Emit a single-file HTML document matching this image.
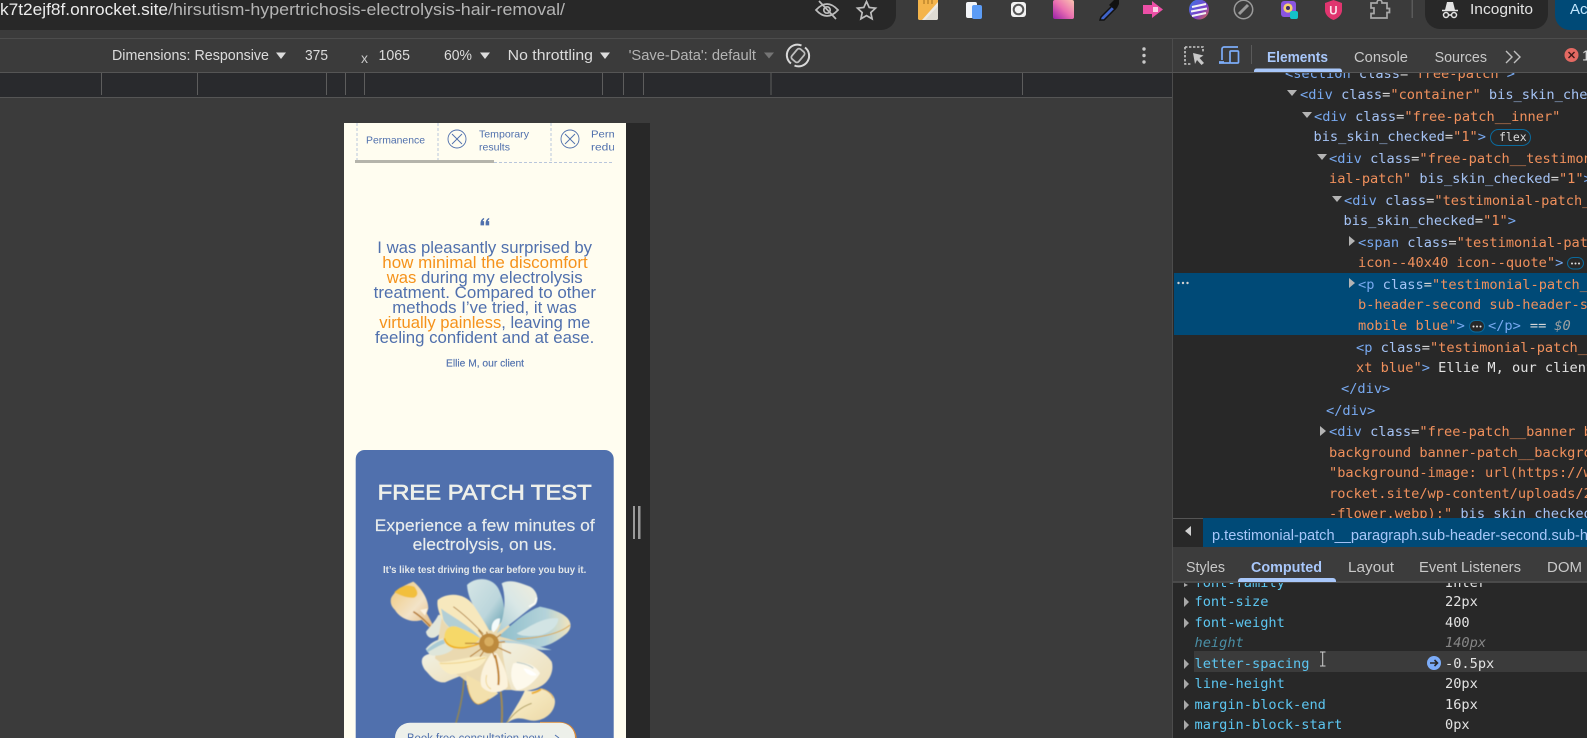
<!DOCTYPE html>
<html lang="en">
<head>
<meta charset="utf-8">
<title>DevTools responsive view</title>
<style>
html,body{margin:0;padding:0;width:1587px;height:738px;overflow:hidden;background:#3b3b3b}
svg{display:block}
text{white-space:pre}
.s{font-family:"Liberation Sans",sans-serif}
.m{font-family:"DejaVu Sans Mono","Liberation Mono",monospace;font-size:13.65px}
.t{fill:#78a9f0}.a{fill:#a5c3f5}.v{fill:#f0905c}.e{fill:#d8d8d8}
.n{fill:#5cc5f0}.w{fill:#e3e3e3}
.tb{font-size:14.5px;fill:#dcdcdc}
.tab{font-size:14.5px;fill:#c8c8c8}
.q{font-size:16.8px;fill:#5070ad}.o{font-size:16.8px;fill:#f5921b}
</style>
</head>
<body>
<svg xmlns="http://www.w3.org/2000/svg" width="1587" height="738" viewBox="0 0 1587 738">
<defs>
<linearGradient id="pk" x1="1" y1="0" x2="0" y2="1"><stop offset="0" stop-color="#fbc4b0"/><stop offset=".5" stop-color="#ea70b0"/><stop offset="1" stop-color="#9a1fa8"/></linearGradient>
<linearGradient id="gl" x1="0" y1="0" x2="1" y2="1"><stop offset="0" stop-color="#3a7be8"/><stop offset=".6" stop-color="#7a3fc8"/><stop offset="1" stop-color="#e8703a"/></linearGradient>
<linearGradient id="bl" x1="0" y1="0" x2="1" y2="1"><stop offset="0" stop-color="#d6e6e6"/><stop offset=".6" stop-color="#bcd6dc"/><stop offset="1" stop-color="#5f9cae"/></linearGradient>
<linearGradient id="tr" x1="1" y1="0" x2="0" y2="1"><stop offset="0" stop-color="#f0eddc"/><stop offset=".5" stop-color="#d9e7e6"/><stop offset="1" stop-color="#a9cbd4"/></linearGradient>
<linearGradient id="bud" x1="0" y1="0" x2="1" y2="1"><stop offset="0" stop-color="#f0c878"/><stop offset=".5" stop-color="#f3e3c8"/><stop offset="1" stop-color="#dca860"/></linearGradient>
<linearGradient id="cr" x1="0" y1="0" x2="1" y2="1"><stop offset="0" stop-color="#fbf1d0"/><stop offset="1" stop-color="#ecd8a4"/></linearGradient>
<linearGradient id="rp" x1="0" y1="0" x2="1" y2="0"><stop offset="0" stop-color="#8fbecb"/><stop offset=".65" stop-color="#b4d3da"/><stop offset="1" stop-color="#f3e5bc"/></linearGradient>
<linearGradient id="lo" x1="0" y1="0" x2="1" y2="1"><stop offset="0" stop-color="#f1f0e2"/><stop offset="1" stop-color="#efdfb8"/></linearGradient>
<filter id="soft" x="-5%" y="-5%" width="110%" height="110%"><feGaussianBlur stdDeviation="1.3"/></filter>
</defs>

<!-- viewport backdrop -->
<rect width="1587" height="738" fill="#3b3b3b"/>

<!-- ruler -->
<rect x="0" y="72" width="1172" height="25" fill="#292a2d"/>
<rect x="0" y="97" width="1172" height="1" fill="#555"/>
<g fill="#5d5d5d">
<rect x="101" y="73" width="1" height="22"/><rect x="197" y="73" width="1" height="22"/><rect x="326" y="73" width="1" height="22"/><rect x="345" y="73" width="1" height="22"/><rect x="364" y="73" width="1" height="22"/><rect x="602" y="73" width="1" height="22"/><rect x="623" y="73" width="1" height="22"/><rect x="643" y="73" width="1" height="22"/><rect x="770.500" y="73" width="1" height="22"/><rect x="1022" y="73" width="1" height="22"/>
</g>

<!-- device page -->
<rect x="626" y="123" width="24" height="615" fill="#282828"/>
<rect x="633" y="506" width="2" height="33" fill="#9a9a9a"/><rect x="638" y="506" width="2.5" height="33" fill="#9a9a9a"/>
<rect x="344" y="123" width="282" height="615" fill="#fffdf0"/>

<!-- table strip -->
<g stroke="#b9c6db" stroke-width="1" stroke-dasharray="3 2" fill="none">
<path d="M357 123V161M438 123V161M551 123V161M494 162.5H614"/>
</g>
<rect x="355" y="160" width="139" height="3" fill="#b5b4ab"/>
<text class="s" x="366" y="143.5" font-size="10.2" fill="#5070ad" textLength="59" lengthAdjust="spacingAndGlyphs">Permanence</text>
<g fill="none" stroke="#5070ad" stroke-width="0.9">
<circle cx="457" cy="139" r="9"/><path d="M452 134L462 144M462 134L452 144"/>
<circle cx="570" cy="139" r="9"/><path d="M565 134L575 144M575 134L565 144"/>
</g>
<text class="s" x="479" y="137.5" font-size="10.2" fill="#5070ad" textLength="50" lengthAdjust="spacingAndGlyphs">Temporary</text>
<text class="s" x="479" y="150.5" font-size="10.2" fill="#5070ad" textLength="31" lengthAdjust="spacingAndGlyphs">results</text>
<svg x="591" y="125" width="23" height="32" viewBox="591 125 23 32"><text class="s" x="591" y="12.5" transform="translate(0,125)" font-size="10.2" fill="#5070ad" textLength="27" lengthAdjust="spacingAndGlyphs">Perm</text><text class="s" x="591" y="25.5" transform="translate(0,125)" font-size="10.2" fill="#5070ad" textLength="30" lengthAdjust="spacingAndGlyphs">reduc</text></svg>

<!-- quote -->
<g fill="#5070ad">
<path d="M480.5 223.500c0-3 1.500-4.800 3.600-5.600v1.500c-.8.5-1.300 1-1.400 1.700h1.400v4.300h-3.600z"/>
<path d="M485.600 223.500c0-3 1.500-4.800 3.600-5.600v1.500c-.8.5-1.300 1-1.400 1.700h1.400v4.300h-3.600z"/>
</g>
<text class="s q" x="377.3" y="253" textLength="214.7" lengthAdjust="spacingAndGlyphs">I was pleasantly surprised by</text>
<text class="s o" x="382.3" y="268" textLength="205.4" lengthAdjust="spacingAndGlyphs">how minimal the discomfort</text>
<text class="s o" x="386.7" y="283" textLength="29.6" lengthAdjust="spacingAndGlyphs">was</text>
<text class="s q" x="421" y="283" textLength="161.7" lengthAdjust="spacingAndGlyphs">during my electrolysis</text>
<text class="s q" x="373.7" y="298" textLength="222.3" lengthAdjust="spacingAndGlyphs">treatment. Compared to other</text>
<text class="s q" x="392.3" y="313" textLength="184.4" lengthAdjust="spacingAndGlyphs">methods I’ve tried, it was</text>
<text class="s o" x="379.3" y="328" textLength="122" lengthAdjust="spacingAndGlyphs">virtually painless</text>
<text class="s q" x="501.3" y="328" textLength="89" lengthAdjust="spacingAndGlyphs">, leaving me</text>
<text class="s q" x="375" y="343" textLength="219.3" lengthAdjust="spacingAndGlyphs">feeling confident and at ease.</text>
<text class="s" x="446" y="366.5" font-size="10.5" fill="#5070ad" stroke="#5070ad" stroke-width=".15" textLength="78" lengthAdjust="spacingAndGlyphs">Ellie M, our client</text>

<!-- banner -->
<path d="M355.700 738V459a9 9 0 0 1 9-9h240a9 9 0 0 1 9 9v279z" fill="#5070ad"/>
<text class="s" x="377.7" y="499.7" font-size="21" fill="#eef0ea" stroke="#eef0ea" stroke-width=".65" textLength="214" lengthAdjust="spacingAndGlyphs">FREE PATCH TEST</text>
<text class="s" x="374.7" y="531" font-size="16.6" fill="#e8ecec" stroke="#e8ecec" stroke-width=".15" textLength="220" lengthAdjust="spacingAndGlyphs">Experience a few minutes of</text>
<text class="s" x="412.7" y="550" font-size="16.6" fill="#e8ecec" stroke="#e8ecec" stroke-width=".15" textLength="144" lengthAdjust="spacingAndGlyphs">electrolysis, on us.</text>
<text class="s" x="383" y="573" font-size="10.2" font-weight="bold" fill="#e4e8ea" textLength="203.3" lengthAdjust="spacingAndGlyphs">It’s like test driving the car before you buy it.</text>

<!-- flower (coordinates in 3x units) -->
<g transform="translate(385 575) scale(.33333)">
<g filter="url(#soft)">
<path d="M237 300C236 350 226 400 212 447" fill="none" stroke="#8f8558" stroke-width="5"/>
<path d="M347 350C352 385 352 420 350 447" fill="none" stroke="#a08a55" stroke-width="6"/>
<!-- lower right bud -->
<path d="M362 447C390 400 410 370 420 345C440 352 455 345 470 340C490 345 510 360 510 380C510 410 480 440 440 437C415 432 395 420 362 447Z" fill="url(#cr)"/>
<path d="M440 355C450 352 460 350 468 342" fill="none" stroke="#eeb02c" stroke-width="6"/>
<path d="M470 342C485 345 500 355 505 370" fill="none" stroke="#e2a840" stroke-width="2.5"/>
<path d="M364 445C385 415 410 395 440 385" fill="none" stroke="#aa9a58" stroke-width="3"/>
<!-- top left bud -->
<path d="M18 70C30 45 60 30 85 20C105 35 130 70 130 100L125 115C140 140 150 165 160 180C135 160 120 145 110 135C80 145 45 130 30 105C20 95 15 85 18 70Z" fill="url(#bud)"/>
<path d="M28 52C50 30 70 28 88 35C100 50 100 62 88 68C65 70 45 60 28 52Z" fill="#f2bf3d"/>
<path d="M85 110C105 122 130 145 158 180" fill="none" stroke="#b87f38" stroke-width="5"/>
<path d="M105 105L128 100L120 122Z" fill="#fbf1df"/>
<!-- back white -->
<path d="M160 120C175 118 190 130 198 150L160 180C145 195 125 190 123 170C135 155 150 140 160 120Z" fill="#e2e6da"/>
<!-- big lower left -->
<path d="M112 250C118 240 130 235 150 235L300 245L270 290C240 295 210 310 180 322C150 325 135 300 120 285C112 272 108 262 112 250Z" fill="url(#lo)"/>
<!-- base behind the centre -->
<path d="M170 130L350 120L400 190L500 270L380 345L280 345L150 250Z" fill="#ead9b0"/>
<!-- top blue -->
<path d="M246 30C270 5 320 5 340 40C355 70 365 110 350 140C335 160 320 170 312 165C290 120 250 90 246 30Z" fill="url(#bl)"/>
<!-- top right -->
<path d="M350 25C375 10 410 25 435 35C455 45 465 75 450 90C420 110 390 140 335 175C360 130 365 70 350 25Z" fill="url(#tr)"/>
<path d="M432 95L450 85L455 68" fill="none" stroke="#fdfcf5" stroke-width="5"/>
<!-- right big -->
<path d="M345 180C380 150 420 110 465 95C490 100 530 110 548 130C560 145 560 160 545 175C515 200 480 220 450 215C420 205 385 195 345 185Z" fill="url(#rp)"/>
<path d="M395 175C430 160 470 125 520 130C520 150 500 170 470 180C440 185 410 185 395 175Z" fill="#d2e4e4"/>
<path d="M395 192C450 190 520 180 555 150" fill="none" stroke="#d9a845" stroke-width="3"/>
<path d="M345 195C400 195 450 210 500 225L470 225C420 215 380 205 345 200Z" fill="#b9d3da"/>
<path d="M320 165C318 150 325 130 345 130C345 145 340 160 325 172Z" fill="#f4fbfb"/>
<!-- left pale -->
<path d="M122 222C135 205 150 195 175 190L205 220C190 240 150 245 135 240Z" fill="#dfe6da"/>
<path d="M124 226C140 210 160 198 176 194L180 205C160 212 140 225 128 232Z" fill="#a9cad4"/>
<!-- cream upper left -->
<path d="M158 75C190 50 240 55 265 90C285 120 305 150 310 170L290 185C240 190 190 170 170 130C160 110 155 90 158 75Z" fill="#f7e8bd"/>
<path d="M168 100C200 125 260 155 285 187C240 190 195 170 175 135Z" fill="#b2cfd6"/>
<path d="M205 95C240 120 270 150 295 177" fill="none" stroke="#a9752c" stroke-width="2.5"/>
<!-- yellow -->
<path d="M178 185C180 160 195 150 215 155C240 165 265 175 285 190C270 210 240 220 205 220C190 215 175 205 178 185Z" fill="#f6d868"/>
<path d="M178 190C182 210 205 222 240 218C255 215 270 212 282 206" fill="none" stroke="#eeb01e" stroke-width="5"/>
<!-- bottom behind -->
<path d="M245 300L320 340L340 355C320 370 295 385 280 388C260 385 240 340 245 300Z" fill="#f3e0ac"/>
<path d="M247 330C252 365 265 385 280 388C292 386 302 380 312 372" fill="none" stroke="#dca53c" stroke-width="2.5"/>
<!-- lower right -->
<path d="M350 205C400 200 470 215 500 260C508 285 495 320 465 335C440 350 400 350 380 345C365 310 355 260 350 205Z" fill="url(#lo)"/>
<path d="M385 265C420 258 450 270 465 295C450 320 420 345 395 345C375 320 375 290 385 265Z" fill="#fdf9ec"/>
<path d="M395 262C412 265 430 268 445 280" fill="none" stroke="#b9c8c4" stroke-width="3"/>
<path d="M415 280C430 280 450 292 455 300C440 305 425 300 415 280Z" fill="#fff"/>
<!-- lower mid -->
<path d="M160 262C200 262 260 240 305 245C300 270 260 295 200 298C180 295 165 275 160 262Z" fill="#f9ecc2"/>
<path d="M165 265C210 268 265 258 302 248" fill="none" stroke="#eed38a" stroke-width="3"/>
<!-- centre bottom -->
<path d="M320 235C295 265 280 310 290 335C310 360 355 355 368 335C372 300 350 260 335 235Z" fill="#fbf2dc"/>
<path d="M330 240C338 270 344 300 340 330" fill="none" stroke="#c08228" stroke-width="6"/>
<path d="M305 300C300 320 305 335 318 342" fill="none" stroke="#efd48e" stroke-width="3"/>
<!-- stamens -->
<g stroke="#b8812f" stroke-width="3.5" fill="none"><path d="M312 205L255 245M312 205L280 165M312 205L305 170M312 205L348 178M312 205L378 235M312 205L285 245M312 205L240 205M312 205L360 200M312 205L330 250"/></g>
<circle cx="312" cy="205" r="30" fill="#bd8a3c"/>
<circle cx="312" cy="200" r="14" fill="#d9ae60"/>
</g>
</g>

<!-- button -->
<path d="M540 722.700H560Q574 724 576 738" fill="none" stroke="#d88a3a" stroke-width="1.6"/>
<path d="M395 738V737.700a15 15 0 0 1 15-15h150a15 15 0 0 1 15 15v.3z" fill="#edf0ea"/>
<text class="s" x="407" y="742" font-size="11.5" fill="#5070ad" textLength="136" lengthAdjust="spacingAndGlyphs">Book free consultation now</text>
<path d="M555 735L559 738" stroke="#5070ad" stroke-width="1" fill="none"/>

<!-- elements panel -->
<rect x="1172" y="72" width="415" height="466" fill="#282828"/>
<rect x="1172" y="72" width="1" height="666" fill="#4c4c4c"/>
<rect x="1174" y="273" width="413" height="62" fill="#004a77"/>
<g class="m">
<text x="1285" y="78"><tspan class="t">&lt;section</tspan><tspan class="a"> class</tspan><tspan class="e">=</tspan><tspan class="v">"free-patch"</tspan><tspan class="t">&gt;</tspan></text>
<text x="1300" y="99"><tspan class="t">&lt;div</tspan><tspan class="a"> class</tspan><tspan class="e">=</tspan><tspan class="v">"container"</tspan><tspan class="a"> bis_skin_checked</tspan></text>
<text x="1314" y="121"><tspan class="t">&lt;div</tspan><tspan class="a"> class</tspan><tspan class="e">=</tspan><tspan class="v">"free-patch__inner"</tspan></text>
<text x="1313.5" y="141"><tspan class="a">bis_skin_checked</tspan><tspan class="e">=</tspan><tspan class="v">"1"</tspan><tspan class="t">&gt;</tspan></text>
<text x="1329" y="163"><tspan class="t">&lt;div</tspan><tspan class="a"> class</tspan><tspan class="e">=</tspan><tspan class="v">"free-patch__testimonial</tspan></text>
<text x="1329" y="183"><tspan class="v">ial-patch"</tspan><tspan class="a"> bis_skin_checked</tspan><tspan class="e">=</tspan><tspan class="v">"1"</tspan><tspan class="t">&gt;</tspan></text>
<text x="1344" y="205"><tspan class="t">&lt;div</tspan><tspan class="a"> class</tspan><tspan class="e">=</tspan><tspan class="v">"testimonial-patch__content</tspan></text>
<text x="1343.5" y="225"><tspan class="a">bis_skin_checked</tspan><tspan class="e">=</tspan><tspan class="v">"1"</tspan><tspan class="t">&gt;</tspan></text>
<text x="1358" y="247"><tspan class="t">&lt;span</tspan><tspan class="a"> class</tspan><tspan class="e">=</tspan><tspan class="v">"testimonial-patch__icon</tspan></text>
<text x="1358" y="267"><tspan class="v">icon--40x40 icon--quote"</tspan><tspan class="t">&gt;</tspan></text>
<text x="1358" y="289"><tspan class="t">&lt;p</tspan><tspan class="a"> class</tspan><tspan class="e">=</tspan><tspan class="v">"testimonial-patch__paragraph</tspan></text>
<text x="1358" y="309"><tspan class="v">b-header-second sub-header-second</tspan></text>
<text x="1358" y="330"><tspan class="v">mobile blue"</tspan><tspan class="t">&gt;</tspan></text>
<text x="1488" y="330"><tspan class="t">&lt;/p&gt;</tspan><tspan class="e" dx="9">==</tspan><tspan dx="8" fill="#a0a0a0" font-style="italic">$0</tspan></text>
<text x="1356" y="352"><tspan class="t">&lt;p</tspan><tspan class="a"> class</tspan><tspan class="e">=</tspan><tspan class="v">"testimonial-patch__author-te</tspan></text>
<text x="1356" y="372"><tspan class="v">xt blue"</tspan><tspan class="t">&gt;</tspan><tspan class="w"> Ellie M, our client</tspan></text>
<text x="1341" y="393" class="t">&lt;/div&gt;</text>
<text x="1326" y="415" class="t">&lt;/div&gt;</text>
<text x="1329" y="436"><tspan class="t">&lt;div</tspan><tspan class="a"> class</tspan><tspan class="e">=</tspan><tspan class="v">"free-patch__banner banner</tspan></text>
<text x="1329" y="457" class="v">background banner-patch__background</text>
<text x="1329" y="477" class="v">"background-image: url(https://www</text>
<text x="1329" y="498" class="v">rocket.site/wp-content/uploads/2025</text>
<text x="1329" y="518"><tspan class="v">-flower.webp);"</tspan><tspan class="a"> bis_skin_checked</tspan></text>
</g>
<!-- expander triangles -->
<g fill="#b4b4b4">
<path d="M1287 90H1297L1292 96Z"/><path d="M1302 112H1312L1307 118Z"/><path d="M1317 154H1327L1322 160Z"/><path d="M1332 196H1342L1337 202Z"/>
<path d="M1349 236V246L1355 241Z"/><path d="M1349 278V288L1355 283Z"/><path d="M1320 426V436L1326 431Z"/>
</g>
<!-- badges -->
<rect x="1490.5" y="129.5" width="40" height="16" rx="8" fill="#282828" stroke="#0b6a9c"/>
<text class="m" x="1499" y="141" style="font-size:11.5px" fill="#dcdcdc">flex</text>
<rect x="1567.5" y="257.5" width="16" height="11.5" rx="5.700" fill="#282828" stroke="#0b6a9c"/>
<g fill="#e3e3e3"><circle cx="1572" cy="263.5" r="1"/><circle cx="1575.5" cy="263.5" r="1"/><circle cx="1579" cy="263.5" r="1"/></g>
<rect x="1469.5" y="320.5" width="15" height="11.5" rx="5.700" fill="#282828" stroke="#0b6a9c"/>
<g fill="#e3e3e3"><circle cx="1473.5" cy="326.5" r="1"/><circle cx="1477" cy="326.5" r="1"/><circle cx="1480.5" cy="326.5" r="1"/></g>
<g fill="#d0d0d0"><circle cx="1178.5" cy="283" r="1.2"/><circle cx="1183" cy="283" r="1.2"/><circle cx="1187.5" cy="283" r="1.2"/></g>

<!-- breadcrumb -->
<rect x="1173" y="518" width="414" height="30" fill="#282828"/>
<rect x="1173" y="518" width="414" height="1" fill="#555"/>
<rect x="1203" y="518" width="384" height="29" fill="#004a77"/>
<path d="M1191 526V536L1185 531Z" fill="#d0d0d0"/>
<text class="s" x="1212" y="540" font-size="15" fill="#a8c7fa" textLength="376" lengthAdjust="spacingAndGlyphs">p.testimonial-patch__paragraph.sub-header-second.sub-h</text>

<!-- computed tabs -->
<rect x="1173" y="547" width="414" height="35" fill="#3c3c3c"/>
<rect x="1173" y="581.5" width="414" height="1" fill="#5a5a5a"/>
<text class="s tab" x="1186" y="572" textLength="39" lengthAdjust="spacingAndGlyphs">Styles</text>
<text class="s tab" x="1251" y="572" textLength="71" lengthAdjust="spacingAndGlyphs" style="fill:#a8c7fa;font-weight:bold">Computed</text>
<text class="s tab" x="1348" y="572" textLength="46" lengthAdjust="spacingAndGlyphs">Layout</text>
<text class="s tab" x="1419" y="572" textLength="102" lengthAdjust="spacingAndGlyphs">Event Listeners</text>
<text class="s tab" x="1547" y="572" textLength="35" lengthAdjust="spacingAndGlyphs">DOM</text>
<path d="M1238 582v-1a3 3 0 0 1 3-3h92a3 3 0 0 1 3 3v1z" fill="#a8c7fa"/>

<!-- computed list -->
<rect x="1173" y="583" width="414" height="155" fill="#282828"/>
<svg x="1173" y="583" width="414" height="155" viewBox="1173 583 414 155" overflow="hidden">
<text class="m n" x="1194.5" y="587">font-family</text><text class="m w" x="1445" y="587">Inter</text>
</svg>
<rect x="1194" y="651" width="393" height="21" fill="#3b3b3b"/>
<g class="m">
<text class="n" x="1194.5" y="606">font-size</text><text class="w" x="1445" y="606">22px</text>
<text class="n" x="1194.5" y="627">font-weight</text><text class="w" x="1445" y="627">400</text>
<text x="1194.5" y="647" fill="#4a8fa6" font-style="italic">height</text><text x="1445" y="647" fill="#868686" font-style="italic">140px</text>
<text class="n" x="1194.5" y="668">letter-spacing</text><text class="w" x="1445" y="668">-0.5px</text>
<text class="n" x="1194.5" y="688">line-height</text><text class="w" x="1445" y="688">20px</text>
<text class="n" x="1194.5" y="709">margin-block-end</text><text class="w" x="1445" y="709">16px</text>
<text class="n" x="1194.5" y="729">margin-block-start</text><text class="w" x="1445" y="729">0px</text>
</g>
<g fill="#a8a8a8">
<path d="M1184 583V587L1188 585Z"/><path d="M1184 597V607L1189 602Z"/><path d="M1184 618V628L1189 623Z"/><path d="M1184 659V669L1189 664Z"/><path d="M1184 679V689L1189 684Z"/><path d="M1184 700V710L1189 705Z"/><path d="M1184 720V730L1189 725Z"/>
</g>
<circle cx="1434" cy="663" r="7" fill="#7cacf8"/>
<path d="M1430 663H1437M1434.5 660L1437.5 663L1434.5 666" fill="none" stroke="#282828" stroke-width="1.6"/>
<path d="M1320 652H1325.5M1322.7 652V666M1320 666H1325.5" fill="none" stroke="#cfcfcf" stroke-width="1"/>

<!-- top browser bar -->
<rect x="0" y="0" width="1587" height="72" fill="#3b3b3b"/>
<path d="M0 0H896V15A15 15 0 0 1 881 30H0Z" fill="#282828"/>
<text class="s" x="0" y="15" font-size="16.5" fill="#ececec" textLength="168" lengthAdjust="spacingAndGlyphs">k7t2ejf8f.onrocket.site</text>
<text class="s" x="168" y="15" font-size="16.5" fill="#b4b4b4" textLength="397" lengthAdjust="spacingAndGlyphs">/hirsutism-hypertrichosis-electrolysis-hair-removal/</text>
<!-- eye off + star -->
<g fill="none" stroke="#bdbdbd" stroke-width="1.7">
<path d="M816 10Q827 -2 838 10Q827 22 816 10Z"/><circle cx="827" cy="10" r="3.2"/><path d="M819 1L836 19"/>
<path d="M866.5 1.500L869.200 7.500L875.500 8.200L870.800 12.600L872.100 18.800L866.500 15.600L860.900 18.800L862.200 12.600L857.500 8.200L863.800 7.500Z"/>
</g>
<!-- extension icons -->
<path d="M918 0H938V18a2 2 0 0 1-2 2H920a2 2 0 0 1-2-2Z" fill="#ece9e2"/><path d="M918 0H932L938 0V2L922 20H920a2 2 0 0 1-2-2Z" fill="#f4b44a"/><path d="M924 0V4M928 0V4M932 0V4" stroke="#a5701f" stroke-width="1"/><path d="M925 20L938 6V18a2 2 0 0 1-2 2Z" fill="#dedbd2"/>
<rect x="966" y="2" width="11" height="16" rx="2" fill="#f3f5f8"/><rect x="972" y="5" width="10" height="14" rx="2" fill="#5c9cf5"/>
<rect x="1011" y="2" width="15" height="15" rx="3" fill="#f2f2f2"/><circle cx="1018.5" cy="9.5" r="4.800" fill="none" stroke="#555" stroke-width="2"/>
<rect x="1053" y="0" width="21" height="19" rx="2" fill="url(#pk)"/>
<path d="M1101 17L1112 6L1115 9L1104 20L1100 20Z" fill="#3f63c9" stroke="#111" stroke-width="1.5"/><path d="M1111 3L1114 0H1119V4L1117 8L1115 10L1109 5Z" fill="#111"/>
<path d="M1143 5H1152V1L1163 9.5L1152 18V14H1143Z" fill="#ec4fa6"/><rect x="1153" y="7" width="5" height="5" fill="#f9d0e4"/>
<circle cx="1199" cy="9.5" r="10" fill="url(#gl)"/><path d="M1192 7L1206 4M1191 11.500L1207 8.500M1192 16L1206 13" stroke="#f4f4f4" stroke-width="2" fill="none"/>
<circle cx="1243.5" cy="9.5" r="9.200" fill="none" stroke="#9a9a9a" stroke-width="1.5"/><path d="M1239 14L1248 5" stroke="#9a9a9a" stroke-width="3"/>
<rect x="1281" y="1" width="15" height="16" rx="3" fill="#8a55e0"/><circle cx="1288" cy="8" r="4.600" fill="#f8d26c"/><circle cx="1288" cy="8" r="2" fill="#3b2a6a"/><rect x="1290" y="11" width="8" height="8" rx="2" fill="#14c2c8"/>
<path d="M1325 3L1333.500 0L1342 3V11Q1341 17 1333.500 20Q1326 17 1325 11Z" fill="#e0356f"/><text class="s" x="1329.3" y="14.5" font-size="11.5" font-weight="bold" fill="#fbe4ec">U</text>
<path d="M1371 3H1377V2.500a2.500 2.500 0 0 1 5 0V3H1387V8.500H1389.500V12.500H1387V18H1371V13.500H1374V8H1371Z" fill="none" stroke="#a8a8a8" stroke-width="1.7"/>
<rect x="1411.5" y="0" width="1.5" height="18" fill="#5a5a5a"/>
<!-- incognito -->
<path d="M1425 0H1548V14A15 15 0 0 1 1533 29H1440A15 15 0 0 1 1425 14Z" fill="#282828"/>
<g fill="none" stroke="#e3e3e3" stroke-width="1.5"><path d="M1442 10.500H1458"/><path d="M1445 10L1447 2H1453L1455 10" fill="#e3e3e3" stroke="none"/><circle cx="1446" cy="15" r="2.500"/><circle cx="1454" cy="15" r="2.500"/><path d="M1448.500 15H1451.500"/></g>
<text class="s" x="1470" y="14" font-size="15" fill="#e3e3e3" textLength="63" lengthAdjust="spacingAndGlyphs">Incognito</text>
<path d="M1555 0H1587V30H1570A15 15 0 0 1 1555 15Z" fill="#004a77"/>
<text class="s" x="1570" y="14" font-size="15" fill="#c2e7ff">Ac</text>

<!-- device toolbar -->
<rect x="0" y="38" width="1587" height="1" fill="#4d4d4d"/>
<rect x="0" y="72" width="1587" height="1" fill="#555"/>
<text class="s tb" x="112" y="60" textLength="157" lengthAdjust="spacingAndGlyphs">Dimensions: Responsive</text>
<path d="M276 52.500H286L281 59Z" fill="#dcdcdc"/>
<text class="s tb" x="305" y="60" textLength="23" lengthAdjust="spacingAndGlyphs">375</text>
<text class="s" x="361" y="63" font-size="14" fill="#c8c8c8">x</text>
<text class="s tb" x="378.5" y="60" textLength="31.5" lengthAdjust="spacingAndGlyphs">1065</text>
<text class="s tb" x="444" y="60" textLength="28" lengthAdjust="spacingAndGlyphs">60%</text>
<path d="M480 52.500H490L485 59Z" fill="#dcdcdc"/>
<text class="s tb" x="507.7" y="60" textLength="85.3" lengthAdjust="spacingAndGlyphs">No throttling</text>
<path d="M600 52.500H610L605 59Z" fill="#dcdcdc"/>
<text class="s tb" x="628.6" y="60" textLength="127.4" style="fill:#b4b4b4" lengthAdjust="spacingAndGlyphs">'Save-Data': default</text>
<path d="M764 52.500H774L769 58.500Z" fill="#757575"/>
<g fill="none">
<rect x="793.500" y="49" width="9" height="13" rx="2.500" transform="rotate(40 798 55.500)" stroke="#bdbdbd" stroke-width="1.800"/>
<path d="M791 63.500A10.500 10.500 0 0 1 801.500 45.500" stroke="#d8d8d8" stroke-width="2"/>
<path d="M805 47.500A10.500 10.500 0 0 1 794.500 65.500" stroke="#d8d8d8" stroke-width="2"/>
</g>
<g fill="#c8c8c8"><circle cx="1144" cy="49" r="1.700"/><circle cx="1144" cy="55.5" r="1.700"/><circle cx="1144" cy="62" r="1.700"/></g>
<rect x="1172" y="39" width="1" height="33" fill="#4c4c4c"/>
<!-- devtools tabs -->
<path d="M1185 47H1203V52M1185 47V64H1191" fill="none" stroke="#c8c8c8" stroke-width="1.6" stroke-dasharray="2.400 1.600"/>
<path d="M1193 53L1203.500 55.500L1199.500 58L1204 63L1201.500 65L1197 60L1195 64Z" fill="#c8c8c8"/>
<path d="M1224 62H1219M1222 60V49a2 2 0 0 1 2-2H1238M1219 63H1230" fill="none" stroke="#7cacf8" stroke-width="1.7"/>
<rect x="1230" y="51" width="8.500" height="12" rx="1" fill="none" stroke="#7cacf8" stroke-width="1.7"/>
<rect x="1251" y="45" width="1" height="19" fill="#5a5a5a"/>
<text class="s tab" x="1267" y="62" textLength="61" lengthAdjust="spacingAndGlyphs" style="fill:#a8c7fa;font-weight:bold">Elements</text>
<text class="s tab" x="1354" y="62" textLength="54" lengthAdjust="spacingAndGlyphs">Console</text>
<text class="s tab" x="1434.6" y="62" textLength="52.4" lengthAdjust="spacingAndGlyphs">Sources</text>
<path d="M1506 51L1512 57L1506 63M1514 51L1520 57L1514 63" fill="none" stroke="#c0c0c0" stroke-width="1.4"/>
<circle cx="1571.5" cy="55" r="7" fill="#e46962"/>
<path d="M1568.500 52L1574.500 58M1574.500 52L1568.500 58" stroke="#3b1a18" stroke-width="1.4"/>
<text class="s" x="1582" y="60.5" font-size="14.5" fill="#dcdcdc">1</text>
<path d="M1254 72v-1a2.500 2.500 0 0 1 2.500-2.500h83a2.500 2.500 0 0 1 2.500 2.500v1z" fill="#a8c7fa"/>
</svg>
</body>
</html>
